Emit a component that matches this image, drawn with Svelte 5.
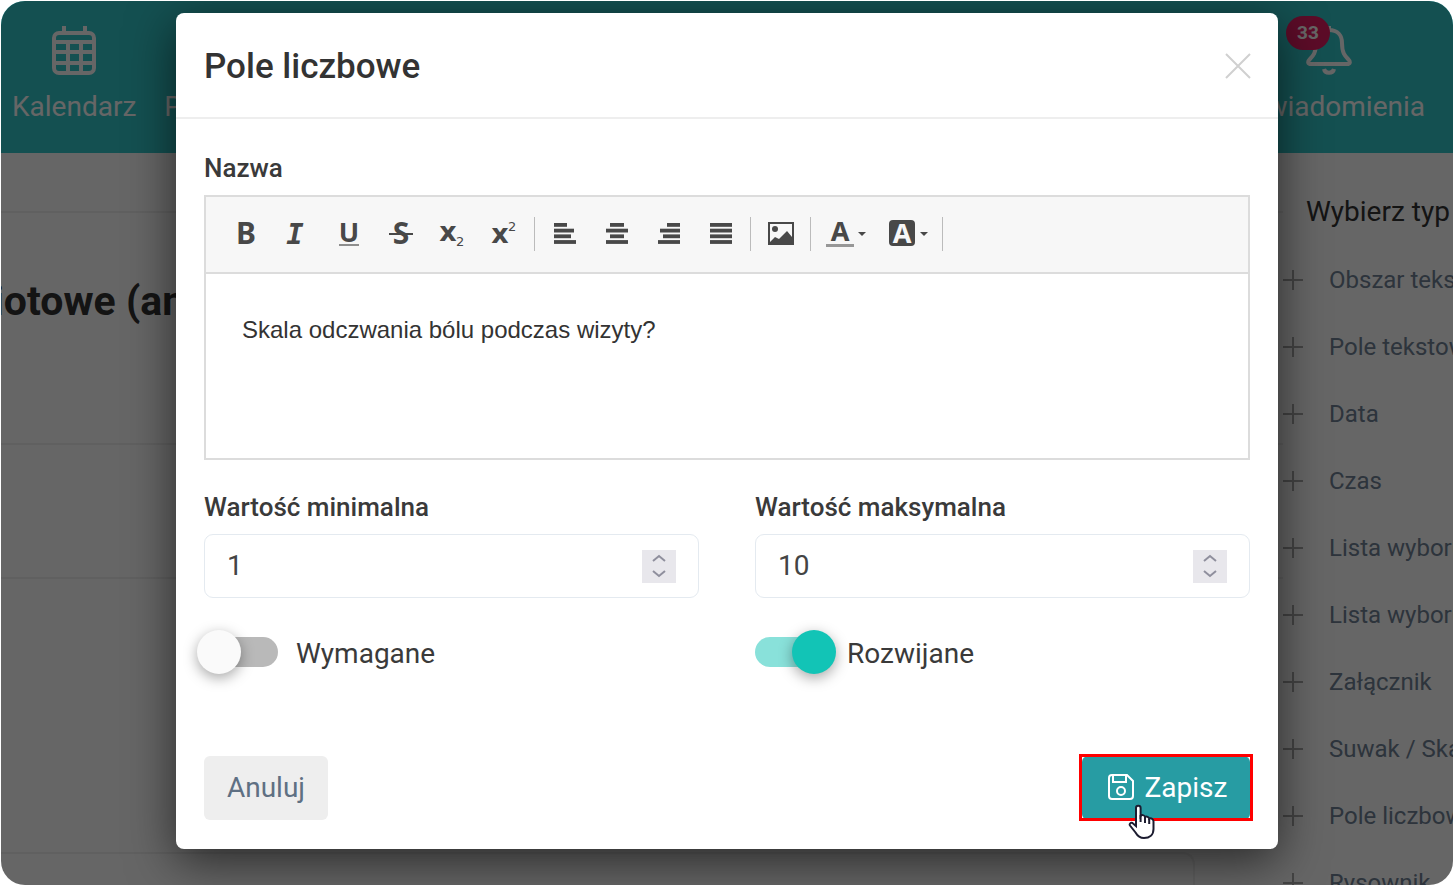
<script>
  let name = "Skala odczwania bólu podczas wizyty?";
  let minValue = 1;
  let maxValue = 10;
  let required = false;
  let expandable = true;

  const fieldTypes = [
    "Obszar tekstowy",
    "Pole tekstowe",
    "Data",
    "Czas",
    "Lista wyboru",
    "Lista wyboru",
    "Załącznik",
    "Suwak / Skala",
    "Pole liczbowe",
    "Rysownik",
  ];

  // each row of an align icon is [x, width]
  const aligns = [
    { label: "Do lewej", rows: [[0, 13], [0, 20], [0, 17], [0, 22]] },
    { label: "Do środka", rows: [[4, 14], [0, 22], [4, 14], [0, 22]] },
    { label: "Do prawej", rows: [[9, 13], [2, 20], [5, 17], [0, 22]] },
    { label: "Wyjustuj", rows: [[0, 22], [0, 22], [0, 22], [0, 22]] },
  ];
</script>

<div class="frame">
  <header class="topbar">
    <nav>
      <a href="#kalendarz">
        <svg width="46" height="50" viewBox="0 0 46 50">
          <rect x="3" y="8" width="40" height="40" rx="5" />
          <path d="M13 1v7M34 1v7M3 17h40M3 27h40M3 38h40M17 17v31M30 17v31" />
        </svg>
        <span>Kalendarz</span>
      </a>
      <a href="#pacjenci"><span>Pacjenci</span></a>
    </nav>
    <nav>
      <a href="#powiadomienia">
        <svg width="46" height="50" viewBox="0 0 46 50">
          <path d="M23 1v4M23 5c-9 0-13 6-13 13 0 10-3 13-6 16-3 3-2 5 1 5h36c3 0 4-2 1-5-3-3-6-6-6-16 0-7-4-13-13-13z" />
          <path d="M18 44c1 5 9 5 10 0" />
        </svg>
        <b class="badge">33</b>
        <span>Powiadomienia</span>
      </a>
    </nav>
  </header>

  <div class="content">
    <main>
      <div class="strip"></div>
      <div class="heading"><h1>iotowe (anamneza)</h1></div>
      <div class="row"></div>
      <div class="space"></div>
      <div class="card"></div>
    </main>
    <aside>
      <h2>Wybierz typ</h2>
      <ul>
        {#each fieldTypes as type}
          <li>
            <svg width="20" height="20" viewBox="0 0 20 20"><path d="M10 0v20M0 10h20" /></svg>
            {type}
          </li>
        {/each}
      </ul>
    </aside>
  </div>

  <div class="overlay">
    <form class="modal" on:submit|preventDefault>
      <div class="modal-header">
        <h3>Pole liczbowe</h3>
        <button type="button" class="close" aria-label="Zamknij">
          <svg width="28" height="28" viewBox="0 0 28 28"><path d="M2 1l24 24M26 1L2 25" /></svg>
        </button>
      </div>

      <div class="modal-body">
        <label class="label" for="name">Nazwa</label>
        <div class="editor">
          <div class="toolbar">
            <button type="button" aria-label="Pogrubienie">
              <svg width="28" height="28" viewBox="0 0 28 28"><text x="15" y="24" class="glyph">B</text></svg>
            </button>
            <button type="button" aria-label="Kursywa">
              <svg width="28" height="28" viewBox="0 0 28 28"><text x="12" y="24" class="glyph mono">I</text></svg>
            </button>
            <button type="button" aria-label="Podkreślenie">
              <svg width="28" height="28" viewBox="0 0 28 28">
                <text x="14" y="22" class="glyph small">U</text>
                <rect x="4" y="24" width="20" height="2" opacity="0.6" />
              </svg>
            </button>
            <button type="button" aria-label="Przekreślenie">
              <svg width="28" height="28" viewBox="0 0 28 28">
                <text x="14" y="24" class="glyph">S</text>
                <rect x="2" y="13" width="24" height="2" />
              </svg>
            </button>
            <button type="button" aria-label="Indeks dolny">
              <svg width="28" height="28" viewBox="0 0 28 28">
                <text x="9" y="21" class="glyph cross">x</text>
                <text x="17" y="26" class="tiny">2</text>
              </svg>
            </button>
            <button type="button" aria-label="Indeks górny">
              <svg width="28" height="28" viewBox="0 0 28 28">
                <text x="9" y="23" class="glyph cross">x</text>
                <text x="17" y="11" class="tiny">2</text>
              </svg>
            </button>
            <i class="sep"></i>
            {#each aligns as align}
              <button type="button" aria-label={align.label}>
                <svg width="22" height="22" viewBox="0 0 22 22">
                  {#each align.rows as row, i}
                    <rect x={row[0]} y={i * 5.7} width={row[1]} height="3.800" />
                  {/each}
                </svg>
              </button>
            {/each}
            <i class="sep"></i>
            <button type="button" aria-label="Obraz">
              <svg width="26" height="24" viewBox="0 0 26 24">
                <path fill-rule="evenodd" d="M0 0h26v23H0zM2 2v18l5-5 4 2 8-8 5 6V2z" />
                <circle cx="7" cy="7" r="3" />
              </svg>
            </button>
            <i class="sep"></i>
            <button type="button" class="color" aria-label="Kolor tekstu">
              <svg width="28" height="28" viewBox="0 0 28 28">
                <text x="14" y="21" class="glyph small">A</text>
                <rect x="0" y="24" width="28" height="3" opacity="0.55" />
              </svg>
              <svg width="8" height="4" viewBox="0 0 8 4"><path d="M0 0h8L4 4z" /></svg>
            </button>
            <button type="button" class="color" aria-label="Kolor tła">
              <svg width="28" height="28" viewBox="0 0 28 28">
                <rect x="1" y="0" width="26" height="26" rx="4" />
                <text x="14" y="23" class="glyph small inverse">A</text>
              </svg>
              <svg width="8" height="4" viewBox="0 0 8 4"><path d="M0 0h8L4 4z" /></svg>
            </button>
            <i class="sep"></i>
          </div>
          <textarea id="name" spellcheck="false" bind:value={name}></textarea>
        </div>

        <div class="columns">
          <div>
            <label class="label" for="min">Wartość minimalna</label>
            <div class="number">
              <input id="min" type="number" bind:value={minValue} />
              <div class="stepper">
                <button type="button" aria-label="Zwiększ minimum" on:click={() => minValue++}>
                  <svg width="14" height="8" viewBox="0 0 14 8"><path d="M1 7l6-5 6 5" /></svg>
                </button>
                <button type="button" aria-label="Zmniejsz minimum" on:click={() => minValue--}>
                  <svg width="14" height="8" viewBox="0 0 14 8"><path d="M1 1l6 5 6-5" /></svg>
                </button>
              </div>
            </div>
            <label class="toggle">
              <input type="checkbox" bind:checked={required} />
              <span>Wymagane</span>
            </label>
          </div>
          <div>
            <label class="label" for="max">Wartość maksymalna</label>
            <div class="number">
              <input id="max" type="number" bind:value={maxValue} />
              <div class="stepper">
                <button type="button" aria-label="Zwiększ maksimum" on:click={() => maxValue++}>
                  <svg width="14" height="8" viewBox="0 0 14 8"><path d="M1 7l6-5 6 5" /></svg>
                </button>
                <button type="button" aria-label="Zmniejsz maksimum" on:click={() => maxValue--}>
                  <svg width="14" height="8" viewBox="0 0 14 8"><path d="M1 1l6 5 6-5" /></svg>
                </button>
              </div>
            </div>
            <label class="toggle">
              <input type="checkbox" bind:checked={expandable} />
              <span>Rozwijane</span>
            </label>
          </div>
        </div>
      </div>

      <div class="modal-footer">
        <button type="button" class="cancel">Anuluj</button>
        <div class="save-wrap">
          <button type="submit" class="save">
            <svg width="26" height="26" viewBox="0 0 26 26">
              <path d="M4 1h15l6 6v15a3 3 0 0 1-3 3H4a3 3 0 0 1-3-3V4a3 3 0 0 1 3-3z" />
              <path d="M5 1v7h13V1" />
              <circle cx="13" cy="17" r="4" />
            </svg>
            Zapisz
          </button>
          <div class="marker"></div>
          <svg class="cursor" width="28" height="36" viewBox="0 0 28 36">
            <path
              d="M8 20V4a2.300 2.300 0 0 1 4.600 0v8c1-1.500 4-1.200 4.400 1 1.500-1 4 0 4.200 1.700 2-1 4.300.3 4.300 2.700V25c0 6-4 9-9.500 9-4 0-6.500-2-8.500-5.500l-5.500-7c-1-1.600.7-3.300 2.500-2.500L8 22z"
            />
            <path d="M12.600 11v7M17 13v6M21.200 15v5" />
          </svg>
        </div>
      </div>
    </form>
  </div>
</div>

<style>
  :global(body) {
    background: #fff;
    font-family: Roboto, "Liberation Sans", sans-serif;
  }
  * {
    box-sizing: border-box;
  }
  h1,
  h2,
  h3,
  ul {
    margin: 0;
    padding: 0;
  }
  button {
    font: inherit;
    padding: 0;
    border: none;
    background: none;
    cursor: pointer;
  }
  .frame {
    position: relative;
    height: calc(100vh - 2px);
    margin: 1px;
    border-radius: 24px;
    overflow: hidden;
    background: #fff;
    display: flex;
    flex-direction: column;
  }

  .topbar {
    flex: none;
    height: 152px;
    display: flex;
    justify-content: space-between;
    padding: 24px 28px 0 11px;
    background: #32c8cb;
  }
  nav {
    display: flex;
    gap: 28px;
  }
  nav a {
    position: relative;
    display: flex;
    flex-direction: column;
    align-items: center;
    justify-content: space-between;
    height: 98px;
    color: #fff;
    font-size: 28px;
    line-height: 32px;
    text-decoration: none;
  }
  nav a span {
    margin-top: auto;
  }
  nav svg {
    fill: none;
    stroke: #fff;
    stroke-width: 4;
  }
  .badge {
    position: absolute;
    top: -9px;
    left: 50%;
    margin-left: -43px;
    width: 44px;
    height: 34px;
    border-radius: 17px;
    background: #e61e64;
    font-size: 19px;
    line-height: 34px;
    text-align: center;
  }

  .content {
    flex: 1;
    min-height: 0;
    display: grid;
    grid-template-columns: 1fr 170px;
  }
  main {
    min-width: 0;
  }
  .strip,
  .heading,
  .row {
    border-bottom: 2px solid #efefef;
  }
  .strip {
    height: 60px;
  }
  .heading {
    height: 232px;
    padding-top: 64px;
  }
  .heading h1 {
    color: #333;
    font-size: 41px;
    line-height: 48px;
    text-indent: -8px;
  }
  .row {
    height: 134px;
  }
  .space {
    height: 273px;
  }
  .card {
    height: 80px;
    margin-right: 88px;
    border: 2px solid #efefef;
    border-width: 2px 2px 0 0;
    border-radius: 0 12px 0 0;
  }
  aside {
    overflow: hidden;
    white-space: nowrap;
  }
  aside h2 {
    height: 93px;
    padding: 43px 0 0 23px;
    color: #333;
    font-size: 28px;
    font-weight: 400;
    line-height: 32px;
  }
  ul {
    list-style: none;
  }
  li {
    display: flex;
    align-items: center;
    gap: 26px;
    height: 67px;
    color: #708296;
    font-size: 24px;
  }
  li svg {
    flex: none;
    stroke: #aaa;
    stroke-width: 2;
  }

  .overlay {
    position: absolute;
    inset: 0;
    display: flex;
    justify-content: center;
    align-items: flex-start;
    padding-top: 12px;
    background: rgba(0, 0, 0, 0.6);
  }
  .modal {
    width: 92%;
    max-width: 1102px;
    border-radius: 8px;
    background: #fff;
    color: #3a3a3a;
    box-shadow: 0 12px 48px rgba(0, 0, 0, 0.6);
  }
  .modal-header {
    display: flex;
    justify-content: space-between;
    align-items: center;
    height: 106px;
    padding: 3px 26px 0 28px;
    border-bottom: 2px solid #eee;
  }
  h3 {
    color: #333;
    font-size: 35px;
    font-weight: 500;
    line-height: 40px;
  }
  .close {
    height: 28px;
  }
  .close svg {
    display: block;
    fill: none;
    stroke: #d0d0d0;
    stroke-width: 2;
  }
  .modal-body {
    padding: 33px 28px 0;
  }
  .label {
    display: block;
    margin-bottom: 11px;
    font-size: 26px;
    font-weight: 500;
    line-height: 32px;
  }
  .editor {
    border: 2px solid #dcdcdc;
  }
  .toolbar {
    display: flex;
    align-items: center;
    height: 77px;
    padding: 0 0 2px 13px;
    background: #f7f7f7;
    border-bottom: 2px solid #dcdcdc;
  }
  .toolbar button {
    display: flex;
    align-items: center;
    justify-content: center;
    width: 52px;
    height: 40px;
  }
  .toolbar .color {
    width: 62px;
    gap: 4px;
  }
  .toolbar svg {
    fill: #484848;
  }
  .sep {
    width: 1px;
    height: 34px;
    margin: 0 4px 0 3px;
    background: #bbb;
  }
  .glyph {
    font: bold 30px "Noto Sans", sans-serif;
    text-anchor: middle;
  }
  .small {
    font-size: 27px;
  }
  .cross {
    font: bold 27px "DejaVu Sans", sans-serif;
  }
  .mono {
    font: italic bold 29px "DejaVu Sans Mono", monospace;
  }
  .tiny {
    font: 13px "DejaVu Sans", sans-serif;
  }
  .inverse {
    fill: #f7f7f7;
  }
  textarea {
    display: block;
    width: 100%;
    height: 184px;
    padding: 41px 36px;
    border: none;
    outline: none;
    resize: none;
    color: #333;
    font: 24px/30px "Liberation Sans", Arial, sans-serif;
  }
  .columns {
    display: grid;
    grid-template-columns: 1fr 1fr;
    gap: 56px;
    margin-top: 31px;
  }
  .number {
    display: flex;
    align-items: center;
    height: 64px;
    padding: 0 22px;
    border: 1px solid #e4eaf0;
    border-radius: 9px;
  }
  .number input {
    flex: 1;
    min-width: 0;
    padding: 0;
    border: none;
    outline: none;
    background: none;
    color: #444;
    font: 28px/32px Roboto, sans-serif;
    appearance: textfield;
  }
  .stepper {
    display: flex;
    flex-direction: column;
    justify-content: space-evenly;
    width: 34px;
    height: 33px;
    background: #e8e7ec;
  }
  .stepper button {
    display: flex;
    align-items: center;
    justify-content: center;
    height: 14px;
  }
  .stepper svg {
    fill: none;
    stroke: #8f8f9d;
    stroke-width: 2;
  }
  .toggle {
    display: flex;
    align-items: center;
    gap: 18px;
    margin-top: 38px;
    font-size: 28px;
    line-height: 36px;
  }
  .toggle input {
    position: relative;
    appearance: none;
    width: 74px;
    height: 30px;
    margin: 0 0 5px;
    border-radius: 15px;
    background: #b9b9b9;
  }
  .toggle input::before {
    content: "";
    position: absolute;
    top: -7px;
    left: -7px;
    width: 44px;
    height: 44px;
    border-radius: 50%;
    background: #fafafa;
    box-shadow: 0 4px 14px rgba(0, 0, 0, 0.35);
  }
  .toggle input:checked {
    background: #89e1da;
  }
  .toggle input:checked::before {
    left: 37px;
    background: #12c4b6;
  }
  .modal-footer {
    display: flex;
    justify-content: space-between;
    padding: 84px 28px 29px;
    font-size: 28px;
  }
  .cancel,
  .save {
    height: 64px;
    padding-bottom: 2px;
    border-radius: 6px;
  }
  .cancel {
    width: 124px;
    background: #eee;
    color: #5f7083;
  }
  .save-wrap {
    position: relative;
  }
  .save {
    display: flex;
    align-items: center;
    justify-content: center;
    gap: 11px;
    width: 168px;
    padding-left: 3px;
    background: #279ca3;
    color: #fff;
  }
  .save svg {
    fill: none;
    stroke: #fff;
    stroke-width: 2;
  }
  .marker {
    position: absolute;
    inset: -2px -3px -1px;
    border: 3px solid #f00;
    pointer-events: none;
  }
  .cursor {
    position: absolute;
    top: 48px;
    left: 46px;
    fill: #fff;
    stroke: #1c1c30;
    stroke-width: 2;
    pointer-events: none;
  }
</style>
